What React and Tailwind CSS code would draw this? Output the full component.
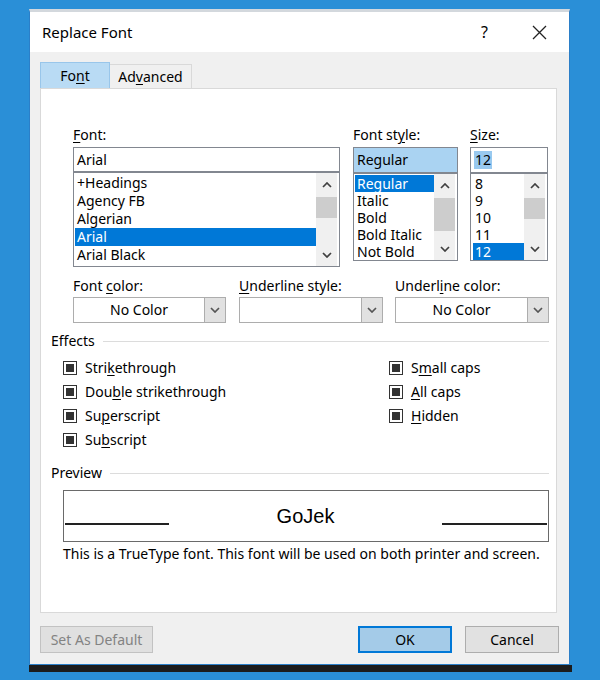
import React from "react";

const U = ({ children }) => (
  <span className="underline decoration-1 underline-offset-[2px]">{children}</span>
);

function Chevron({ dir = "down", color = "#404040" }) {
  return (
    <svg width="10" height="6" viewBox="0 0 10 6">
      <path
        d={dir === "down" ? "M1 1 L5 5 L9 1" : "M1 5 L5 1 L9 5"}
        fill="none"
        stroke={color}
        strokeWidth="1.7"
      />
    </svg>
  );
}

function ScrollBar({ thumbH = 21 }) {
  return (
    <div className="w-[21px] flex flex-col bg-[#f0f0f0] mr-[2px]">
      <div className="h-[24px] flex items-center justify-center">
        <Chevron dir="up" />
      </div>
      <div className="bg-[#cdcdcd]" style={{ height: thumbH }} />
      <div className="flex-1" />
      <div className="h-[22px] flex items-center justify-center">
        <Chevron dir="down" />
      </div>
    </div>
  );
}

function ListBox({ items, selected, h, itemH, selW, thumbH, padL = "pl-[2px]" }) {
  return (
    <div
      className="flex border border-[#828790] bg-white"
      style={{ height: h }}
    >
      <div className={`flex-1 pt-[1px] overflow-hidden ${padL}`}>
        {items.map((it) => (
          <div
            key={it}
            className={`flex items-center pl-[2px] ${
              it === selected ? "bg-[#0078d7] text-white" : "text-black"
            }`}
            style={{
              height: itemH,
              lineHeight: `${itemH}px`,
              width: it === selected ? selW : undefined,
            }}
          >
            {it}
          </div>
        ))}
      </div>
      <ScrollBar thumbH={thumbH} />
    </div>
  );
}

function Dropdown({ w, value }) {
  return (
    <div
      className="h-[26px] flex border border-[#adadad] bg-white"
      style={{ width: w }}
    >
      <div className="flex-1 flex items-center justify-center text-black">
        {value}
      </div>
      <div className="w-[21px] bg-[#e1e1e1] border-l border-[#adadad] flex items-center justify-center">
        <Chevron dir="down" color="#555" />
      </div>
    </div>
  );
}

function Check({ children }) {
  return (
    <div className="h-[18px] flex items-center">
      <div className="w-[14px] h-[14px] border border-[#333] bg-white p-[2px]">
        <div className="w-full h-full bg-[#333]" />
      </div>
      <div className="ml-[8px]">{children}</div>
    </div>
  );
}

function SectionHeader({ children }) {
  return (
    <div className="h-[18px] flex items-center">
      <div>{children}</div>
      <div className="flex-1 ml-[8px] h-px bg-[#dcdcdc]" />
    </div>
  );
}

export default function App() {
  return (
    <div className="w-[600px] h-[680px] bg-[#2a8fd7] pt-[9px] font-['Noto_Sans','Open_Sans',sans-serif] text-[14px] leading-[18px] text-black">
      <div className="ml-[29px] w-[541px] h-[656px] bg-[#f0f0f0] border border-[#2b7fc8] border-t-[3px] border-t-[#d3d8dd] flex flex-col">
        {/* title bar */}
        <div className="h-[40px] bg-white flex items-center pl-[12px] pr-[22px]">
          <div className="text-[15px] flex-1">Replace Font</div>
          <div className="text-[16px] mr-[44px]">?</div>
          <svg width="15" height="15" viewBox="0 0 15 15">
            <path d="M1 1 L14 14 M14 1 L1 14" stroke="#222" strokeWidth="1.3" />
          </svg>
        </div>

        {/* body */}
        <div className="flex-1 flex flex-col pl-[10px] pt-[10px]">
          {/* tabs */}
          <div className="flex items-end h-[26px]">
            <div className="w-[70px] h-[26px] bg-[#b9dbf4] border border-[#99c6ea] border-b-0 flex items-center justify-center pt-[1px]">
              Fo<U>n</U>t
            </div>
            <div className="w-[82px] h-[24px] bg-[#f0f0f0] border border-[#d9d9d9] border-b-0 border-l-0 flex items-center justify-center">
              Ad<U>v</U>anced
            </div>
          </div>

          {/* panel */}
          <div className="w-[517px] h-[525px] bg-white border border-[#d9d9d9] pl-[10px] pr-[7px] pt-[37px]">
            {/* font row */}
            <div className="pl-[22px] flex items-start">
              <div className="w-[267px]">
                <div>
                  <U>F</U>ont:
                </div>
                <div className="mt-[3px] h-[25px] border border-[#828790] flex items-center pl-[3px]">
                  Arial
                </div>
                <ListBox
                  items={["+Headings", "Agency FB", "Algerian", "Arial", "Arial Black"]}
                  selected="Arial"
                  h={95}
                  itemH={18}
                  selW={242}
                  thumbH={21}
                  padL="pl-[1px]"
                />
              </div>
              <div className="w-[105px] ml-[13px]">
                <div>
                  Font st<U>y</U>le:
                </div>
                <div className="mt-[3px] h-[26px] border border-[#828790] bg-[#aad3f2] flex items-center pl-[3px]">
                  Regular
                </div>
                <ListBox
                  items={["Regular", "Italic", "Bold", "Bold Italic", "Not Bold"]}
                  selected="Regular"
                  h={88}
                  itemH={17}
                  selW={79}
                  thumbH={33}
                  padL="pl-[1px]"
                />
              </div>
              <div className="w-[78px] ml-[12px]">
                <div>
                  <U>S</U>ize:
                </div>
                <div className="mt-[3px] h-[26px] border border-[#828790] flex items-center pl-[3px]">
                  <span className="bg-[#99c9ef] px-[1px]">12</span>
                </div>
                <ListBox
                  items={["8", "9", "10", "11", "12"]}
                  selected="12"
                  h={88}
                  itemH={17}
                  selW={53}
                  thumbH={21}
                  padL="pl-[2px]"
                />
              </div>
            </div>

            {/* colour row */}
            <div className="pl-[22px] mt-[10px] flex">
              <div className="w-[153px]">
                <div>
                  Font <U>c</U>olor:
                </div>
                <div className="mt-[2px]">
                  <Dropdown w={153} value="No Color" />
                </div>
              </div>
              <div className="w-[144px] ml-[13px]">
                <div>
                  <U>U</U>nderline style:
                </div>
                <div className="mt-[2px]">
                  <Dropdown w={144} value="" />
                </div>
              </div>
              <div className="w-[154px] ml-[12px]">
                <div>
                  Underl<U>i</U>ne color:
                </div>
                <div className="mt-[2px]">
                  <Dropdown w={154} value="No Color" />
                </div>
              </div>
            </div>

            {/* effects */}
            <div className="mt-[9px]">
              <SectionHeader>Effects</SectionHeader>
            </div>
            <div className="mt-[9px] pl-[12px] flex">
              <div className="w-[326px] flex flex-col gap-[6px]">
                <Check>
                  Stri<U>k</U>ethrough
                </Check>
                <Check>
                  Dou<U>b</U>le strikethrough
                </Check>
                <Check>
                  Su<U>p</U>erscript
                </Check>
                <Check>
                  Su<U>b</U>script
                </Check>
              </div>
              <div className="flex flex-col gap-[6px]">
                <Check>
                  S<U>m</U>all caps
                </Check>
                <Check>
                  <U>A</U>ll caps
                </Check>
                <Check>
                  <U>H</U>idden
                </Check>
              </div>
            </div>

            {/* preview */}
            <div className="mt-[15px]">
              <SectionHeader>Preview</SectionHeader>
            </div>
            <div className="ml-[12px] mt-[8px] w-[486px] h-[52px] border border-[#6a6a6a] flex items-center px-[1px]">
              <div className="w-[104px] h-[2px] bg-[#222] mt-[16px]" />
              <div className="flex-1 text-center text-[20px] font-['Liberation_Sans',Arial,sans-serif] leading-[24px]">
                GoJek
              </div>
              <div className="w-[105px] h-[2px] bg-[#222] mt-[16px]" />
            </div>
            <div className="ml-[12px] mt-[3px]">
              This is a TrueType font. This font will be used on both printer and screen.
            </div>
          </div>

          {/* buttons */}
          <div className="mt-[13px] flex items-start">
            <div className="w-[113px] h-[27px] bg-[#e0e0e0] border border-[#c2c2c2] text-[#838383] flex items-center justify-center">
              Set As Default
            </div>
            <div className="ml-[205px] w-[94px] h-[27px] bg-[#a4cbe8] border-2 border-[#0078d7] flex items-center justify-center">
              OK
            </div>
            <div className="ml-[13px] w-[94px] h-[27px] bg-[#e1e1e1] border border-[#adadad] flex items-center justify-center">
              Cancel
            </div>
          </div>
        </div>
      </div>
      <div className="ml-[29px] w-[543px] h-[7px] bg-[#1c1c1c]" />
    </div>
  );
}
